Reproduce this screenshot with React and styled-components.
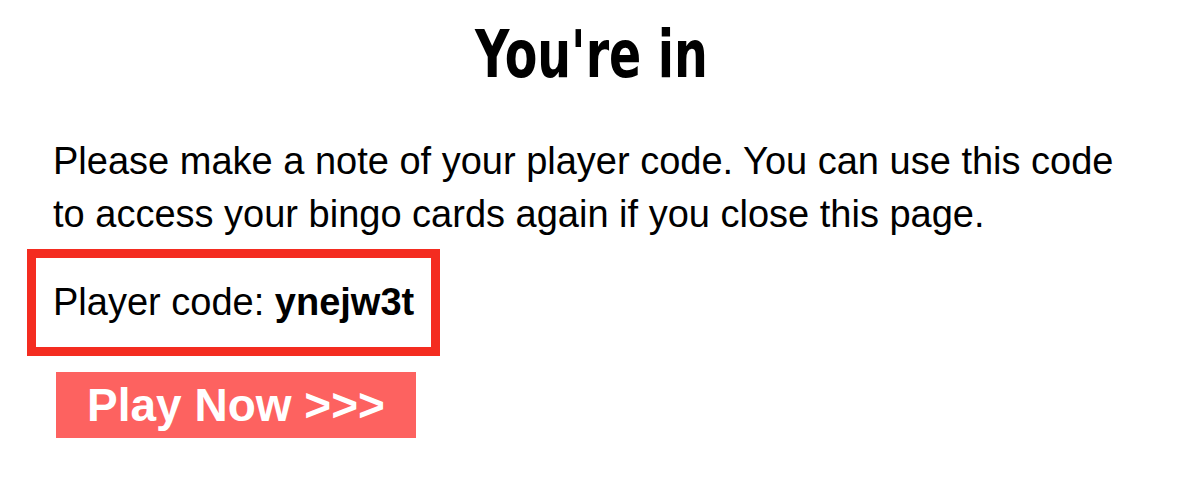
import React from "react"
import styled, { createGlobalStyle } from "styled-components"

const GlobalStyle = createGlobalStyle`
  body {
    margin: 0;
    background: #fff;
    font-family: "Liberation Sans", Arial, sans-serif;
    color: #000;
  }
`

const Page = styled.main`
  display: flex;
  flex-direction: column;
  align-items: flex-start;
  padding: 15px 53px 0 53px;
`

// no narrow face installed, so squeeze the condensed one a bit
const Title = styled.h1`
  align-self: center;
  margin: 0;
  font-family: "DejaVu Sans Condensed", "DejaVu Sans", sans-serif;
  font-weight: bold;
  font-size: 66px;
  line-height: 80px;
  transform: scaleX(0.8);
`

const Note = styled.p`
  margin: 40px 0 0 0;
  font-size: 38px;
  line-height: 53px;
`

const CodeBox = styled.div`
  margin: 8px 0 0 -26px;
  border: 9px solid #f42c20;
  padding: 22px 17px 23px 17px;
  font-size: 38px;
  line-height: 44px;

  strong {
    font-weight: bold;
  }
`

const PlayButton = styled.button`
  margin: 16px 0 0 3px;
  border: none;
  background: #fd6260;
  color: #fff;
  font-family: "Liberation Sans", Arial, sans-serif;
  font-weight: bold;
  font-size: 46px;
  line-height: 66px;
  padding: 0 31px;
  cursor: pointer;
`

const App = () => (
  <>
    <GlobalStyle />
    <Page>
      <Title>You're in</Title>
      <Note>
        Please make a note of your player code. You can use this code
        <br />
        to access your bingo cards again if you close this page.
      </Note>
      <CodeBox>
        Player code: <strong>ynejw3t</strong>
      </CodeBox>
      <PlayButton>Play Now &gt;&gt;&gt;</PlayButton>
    </Page>
  </>
)

export default App
